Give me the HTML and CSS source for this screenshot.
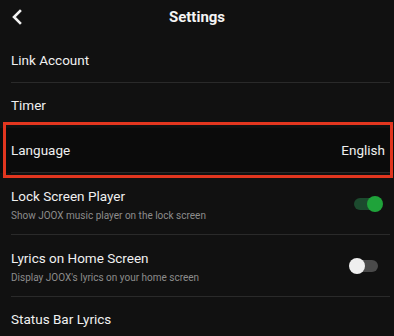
FILE: index.html
```html
<!DOCTYPE html>
<html>
<head>
<meta charset="utf-8">
<link rel="stylesheet" href="styles.css">
</head>
<body>
<div class="screen">
  <header class="header">
    <svg class="back" width="12" height="16" viewBox="0 0 12 16"><polyline points="9,2 3,8 9,14" fill="none" stroke="#f2f2f2" stroke-width="2.6" stroke-linecap="square" stroke-linejoin="miter"/></svg>
    <div class="title">Settings</div>
  </header>
  <div class="row"><div class="inner"><span class="label">Link Account</span></div></div>
  <div class="row"><div class="inner noline"><span class="label">Timer</span></div></div>
  <div class="row highlight"><div class="inner"><span class="label">Language</span><span class="value">English</span></div></div>
  <div class="row tall"><div class="inner">
    <div class="texts"><span class="label">Lock Screen Player</span><span class="sub">Show JOOX music player on the lock screen</span></div>
    <div class="switch on"><span class="track"></span><span class="knob"></span></div>
  </div></div>
  <div class="row tall"><div class="inner">
    <div class="texts"><span class="label">Lyrics on Home Screen</span><span class="sub">Display JOOX's lyrics on your home screen</span></div>
    <div class="switch off"><span class="track"></span><span class="knob"></span></div>
  </div></div>
  <div class="row"><div class="inner noline"><span class="label">Status Bar Lyrics</span></div></div>
</div>
</body>
</html>
```
FILE: styles.css
```css
html, body { margin: 0; padding: 0; background: #111111; }
body { font-family: Roboto, "Noto Sans", sans-serif; color: #f0f0f0; width: 394px; height: 336px; overflow: hidden; }
.screen { display: flex; flex-direction: column; }
.header { height: 38px; position: relative; display: flex; justify-content: center; }
.back { position: absolute; left: 11px; top: 9px; }
.title { font-size: 15px; font-weight: 700; line-height: 34px; color: #f4f4f4; }
.row { height: 45px; display: flex; }
.row .inner { flex: 1; margin-left: 11px; margin-right: 4px; padding-right: 5px; display: flex; align-items: center; justify-content: space-between; border-bottom: 1px solid #2a2a2a; }
.row .inner.noline { border-bottom-color: transparent; }
.label { font-size: 13.5px; color: #f0f0f0; }
.value { font-size: 13.5px; color: #f0f0f0; }
.tall { height: 62px; }
.texts { display: flex; flex-direction: column; gap: 6px; padding-top: 1px; }
.sub { font-size: 10px; color: #8c8c8c; }
.highlight { position: relative; background: #0b0b0b; }
.highlight::after { content: ""; position: absolute; left: 3px; right: 1px; top: -6px; bottom: -5px; border: 3.5px solid #e2361f; pointer-events: none; }
.switch { position: relative; width: 34px; height: 16px; margin-right: 2px; margin-top: 0; }
.track { position: absolute; left: 5px; top: 2px; width: 24px; height: 12px; border-radius: 6px; }
.knob { position: absolute; top: 0; width: 16px; height: 16px; border-radius: 50%; }
.on .track { background: #1c4a2e; }
.on .knob { right: 0; background: #1fa33a; }
.off .track { background: #4a4a4a; }
.off .knob { left: 0; background: #efefef; }
```
